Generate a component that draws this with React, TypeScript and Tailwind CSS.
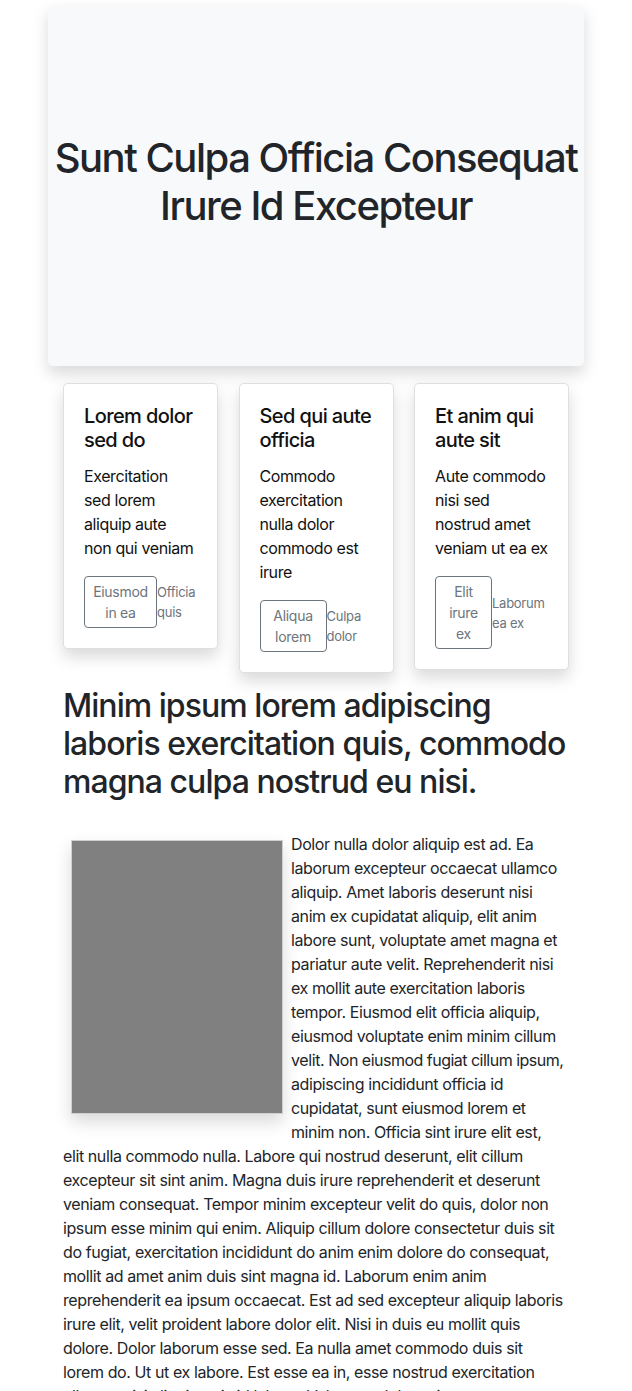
import React from "react";

const font = { fontFamily: "Inter, 'Noto Sans', 'Liberation Sans', sans-serif" };

type CardProps = {
  title: string;
  text: string;
  btn: string;
  link: string;
  btnW: string;
};

function Card({ title, text, btn, link, btnW }: CardProps) {
  return (
    <div className="w-[155px] shrink-0 self-start rounded-[5px] border border-[rgba(0,0,0,0.125)] bg-white p-5 shadow-[0_8px_16px_rgba(0,0,0,0.15)]">
      <h5 className="mb-3 text-[20px] font-medium leading-[24px] tracking-[-0.03em] text-[#111]">{title}</h5>
      <p className="mb-4 text-[16px] leading-[24px] tracking-[-0.025em] text-[#111]">{text}</p>
      <div className="flex items-center">
        <button
          className={`${btnW} shrink-0 rounded-[4px] border border-[#6c757d] px-2 py-1 text-center text-[14px] leading-[21px] tracking-[-0.02em] text-[#6c757d]`}
        >
          {btn}
        </button>
        <a className="min-w-0 flex-1 text-[13px] leading-[20px] tracking-[-0.02em] text-[#6c757d]">{link}</a>
      </div>
    </div>
  );
}

export default function App() {
  return (
    <div className="min-h-[1391px] bg-white px-[48px] pt-[5px] text-[#212529]" style={font}>
      <div className="flex h-[361px] items-center justify-center rounded-[5px] bg-[#f8f9fa] pb-[7px] shadow-[0_8px_16px_rgba(0,0,0,0.15)]">
        <h1 className="text-center text-[40px] font-medium leading-[48px] tracking-[-0.037em] text-[#212529]">
          Sunt Culpa Officia Consequat Irure Id Excepteur
        </h1>
      </div>

      <div className="px-[15px]">
        <div className="mt-[17px] flex justify-between">
          <Card
            title="Lorem dolor sed do"
            text="Exercitation sed lorem aliquip aute non qui veniam"
            btn="Eiusmod in ea"
            link="Officia quis"
            btnW="w-[73px]"
          />
          <Card
            title="Sed qui aute officia"
            text="Commodo exercitation nulla dolor commodo est irure"
            btn="Aliqua lorem"
            link="Culpa dolor"
            btnW="w-[67px]"
          />
          <Card
            title="Et anim qui aute sit"
            text="Aute commodo nisi sed nostrud amet veniam ut ea ex"
            btn="Elit irure ex"
            link="Laborum ea ex"
            btnW="w-[57px]"
          />
        </div>

        <h2 className="mt-[14px] text-[32px] font-medium leading-[38px] tracking-[-0.03em] text-[#212529]">
          Minim ipsum lorem adipiscing laboris exercitation quis, commodo magna culpa nostrud eu nisi.
        </h2>

        <p className="mt-[31px] pr-[3px] text-[16px] leading-[24px] tracking-[-0.025em] text-[#212529]">
          <span className="float-left m-2 block h-[274px] w-[212px] border border-[#d0d0d0] bg-[#808080] shadow-[0_8px_16px_rgba(0,0,0,0.15)]" />
          Dolor nulla dolor aliquip est ad. Ea laborum excepteur occaecat ullamco aliquip. Amet laboris deserunt nisi anim ex cupidatat aliquip, elit anim labore sunt, voluptate amet magna et pariatur aute velit. Reprehenderit nisi ex mollit aute exercitation laboris tempor. Eiusmod elit officia aliquip, eiusmod voluptate enim minim cillum velit. <span className="tracking-[-0.032em]">Non eiusmod fugiat cillum ipsum,</span> adipiscing incididunt officia id cupidatat, sunt eiusmod lorem et minim non. Officia sint irure elit est, elit nulla commodo nulla. Labore qui nostrud deserunt, elit cillum excepteur sit sint anim. Magna duis irure reprehenderit et deserunt veniam consequat. Tempor minim excepteur velit do quis, dolor non ipsum esse minim qui enim. Aliquip cillum dolore consectetur duis sit do fugiat, exercitation incididunt do anim enim dolore do consequat, mollit ad amet anim duis sint magna id. Laborum enim anim reprehenderit ea ipsum occaecat. Est ad sed excepteur aliquip laboris irure elit, velit proident labore dolor elit. Nisi in duis eu mollit quis dolore. Dolor laborum esse sed. Ea nulla amet commodo duis sit lorem do. Ut ut ex labore. Est esse ea in, esse nostrud exercitation ullamco nisi aliquip quis id labore. Voluptate dolore sit consequat tempor, amet ut lorem nostrud.
        </p>
      </div>
    </div>
  );
}
